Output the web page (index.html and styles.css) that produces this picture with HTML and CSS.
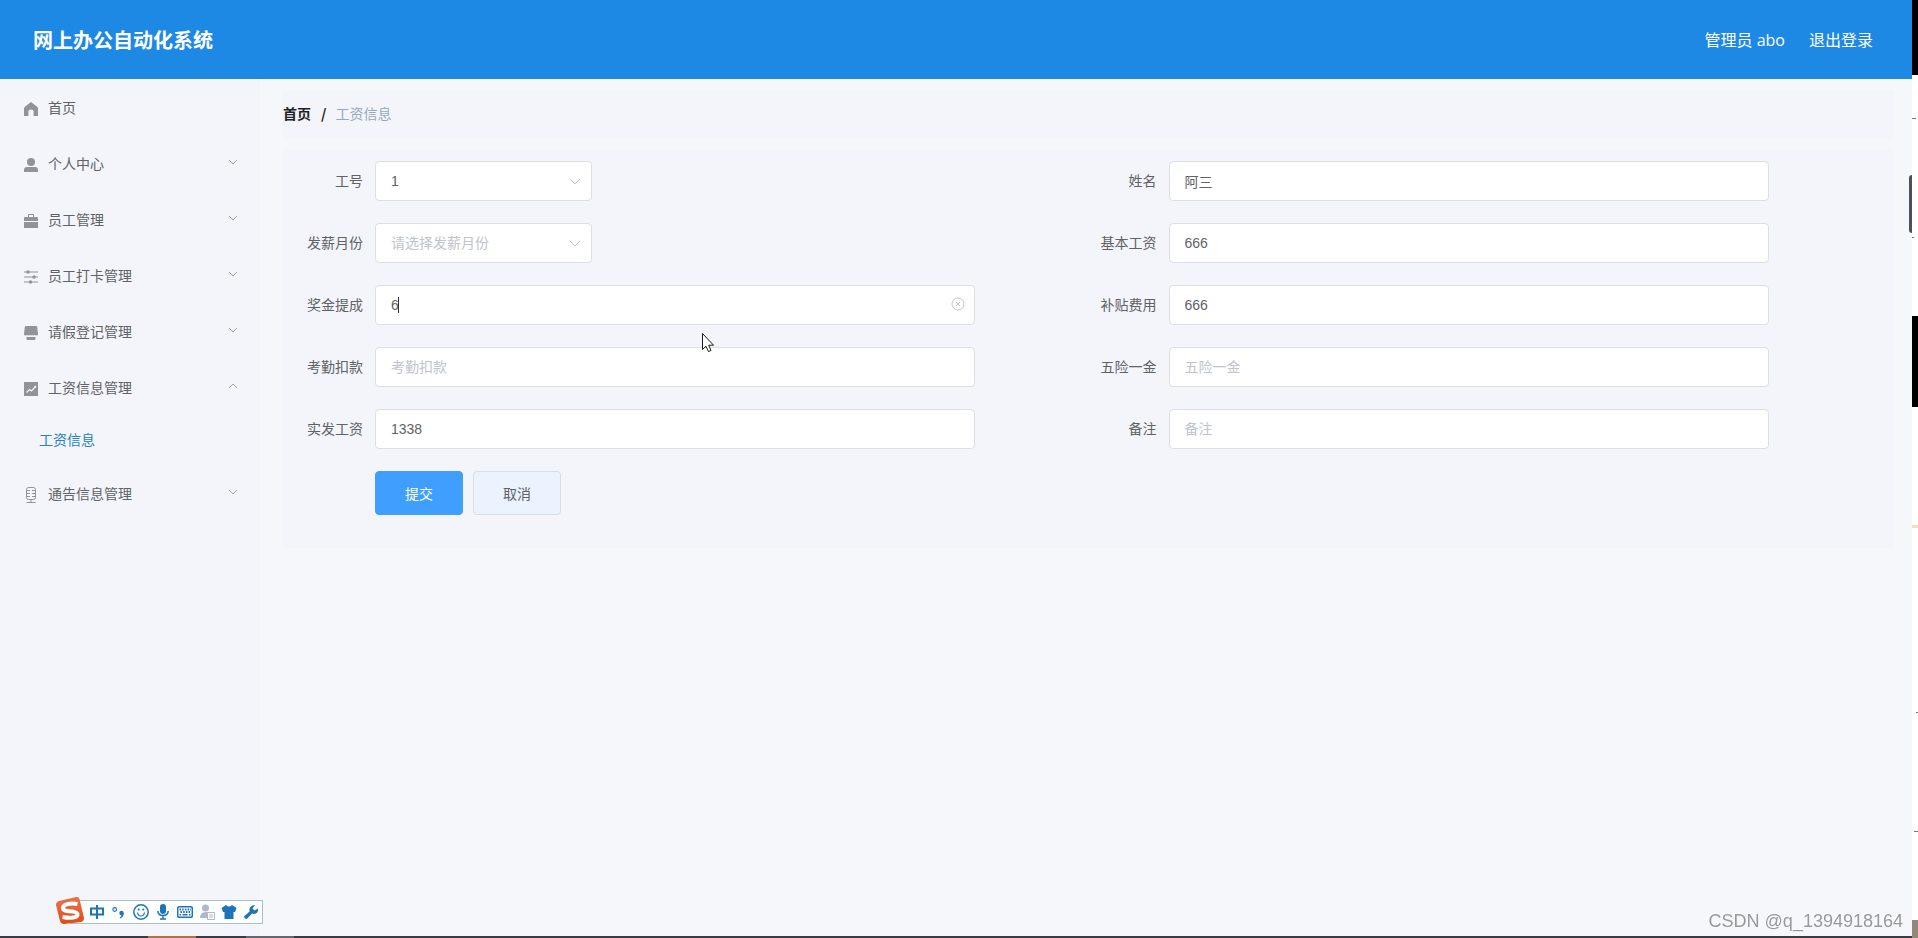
FILE: index.html
```html
<!DOCTYPE html>
<html lang="zh-CN">
<head>
<meta charset="utf-8">
<title>网上办公自动化系统</title>
<link rel="stylesheet" href="styles.css">
</head>
<body>
<div class="desktop">
  <div class="app">
    <header class="header">
      <h1 class="title">网上办公自动化系统</h1>
      <nav class="account">
        <span>管理员 abo</span>
        <a href="#">退出登录</a>
      </nav>
    </header>
    <div class="body">
      <aside class="sidebar">
        <a class="item" href="#">
          <svg class="icon" viewBox="0 0 14 14"><path d="M7 0 13.400 5 14 6.600V14H9.600V9.200Q9.600 7.600 7 7.600T4.400 9.200V14H0V6.600L.6 5Z"/></svg>
          <span class="name">首页</span>
        </a>
        <a class="item" href="#">
          <svg class="icon" viewBox="0 0 14 14"><circle cx="7" cy="4" r="4"/><path d="M0 14V12Q0 9 3 9H11Q14 9 14 12V14Z"/></svg>
          <span class="name">个人中心</span>
          <svg class="arrow" viewBox="0 0 12 12"><path d="M2 4 6 8 10 4"/></svg>
        </a>
        <a class="item" href="#">
          <svg class="icon" viewBox="0 0 14 14"><path d="M4 3V0H10V3H13Q14 3 14 4V7H0V4Q0 3 1 3ZM5 1V3H9V1ZM0 8H14V14H0Z" fill-rule="evenodd"/></svg>
          <span class="name">员工管理</span>
          <svg class="arrow" viewBox="0 0 12 12"><path d="M2 4 6 8 10 4"/></svg>
        </a>
        <a class="item" href="#">
          <svg class="icon" viewBox="0 0 14 14"><path d="M0 1.500H14V2.500H0ZM0 6.500H14V7.500H0ZM0 11.500H14V12.500H0Z"/><circle cx="4" cy="2" r="1.700"/><circle cx="10" cy="7" r="1.700"/><circle cx="6.500" cy="12" r="1.700"/></svg>
          <span class="name">员工打卡管理</span>
          <svg class="arrow" viewBox="0 0 12 12"><path d="M2 4 6 8 10 4"/></svg>
        </a>
        <a class="item" href="#">
          <svg class="icon" viewBox="0 0 14 14"><path d="M2 0H12Q13 0 13.200 1L14 8Q14 9.500 12.500 9.500L11 9 9.500 9.500 8 9 7 9.500 6 9 4.500 9.500 3 9 1.500 9.500Q0 9.500 0 8L.8 1Q1 0 2 0ZM2.500 11H11.500V12.500Q11.500 14 10.500 14H3.500Q2.500 14 2.500 12.500Z"/></svg>
          <span class="name">请假登记管理</span>
          <svg class="arrow" viewBox="0 0 12 12"><path d="M2 4 6 8 10 4"/></svg>
        </a>
        <a class="item" href="#">
          <svg class="icon" viewBox="0 0 14 14"><path d="M0 0H14V14H0Z"/><path d="M2.500 10.500 5.500 7.500 7.500 9 11.500 4.500" fill="none" stroke="#f3f5fa" stroke-width="1.200"/><circle cx="11.300" cy="4.700" r="1" fill="#f3f5fa"/></svg>
          <span class="name">工资信息管理</span>
          <svg class="arrow" viewBox="0 0 12 12"><path d="M2 8 6 4 10 8"/></svg>
        </a>
        <a class="subitem" href="#">工资信息</a>
        <a class="item" href="#">
          <svg class="icon mic" viewBox="0 0 14 16"><path d="M4.500.5H9.500Q11.500.5 11.500 2.500V10.500Q11.500 12.500 9.500 12.500H4.500Q2.500 12.500 2.500 10.500V2.500Q2.500.5 4.500.5ZM3 3.500H6M3 6.500H6M3 9.500H6M8 3.500H11M8 6.500H11M8 9.500H11M7 12.500V15.500M2.500 15.500H11.500"/></svg>
          <span class="name">通告信息管理</span>
          <svg class="arrow" viewBox="0 0 12 12"><path d="M2 4 6 8 10 4"/></svg>
        </a>
      </aside>
      <main class="main">
        <nav class="crumbs">
          <a class="home" href="#">首页</a><span class="slash">/</span><span class="here">工资信息</span>
        </nav>
        <form class="form">
          <div class="field">
            <label for="no">工号</label>
            <div class="control short">
              <select id="no"><option>1</option></select>
              <svg class="arrow" viewBox="0 0 12 12"><path d="M1 3 6 8 11 3"/></svg>
            </div>
          </div>
          <div class="field">
            <label for="name">姓名</label>
            <div class="control"><input id="name" type="text" value="阿三"></div>
          </div>
          <div class="field">
            <label for="month">发薪月份</label>
            <div class="control short">
              <select id="month" class="empty"><option>请选择发薪月份</option></select>
              <svg class="arrow" viewBox="0 0 12 12"><path d="M1 3 6 8 11 3"/></svg>
            </div>
          </div>
          <div class="field">
            <label for="base">基本工资</label>
            <div class="control"><input id="base" type="text" value="666"></div>
          </div>
          <div class="field">
            <label for="bonus">奖金提成</label>
            <div class="control">
              <input id="bonus" type="text" value="6">
              <span class="caret"></span>
              <button class="clear" type="button" aria-label="清空">
                <svg viewBox="0 0 14 14"><circle cx="7" cy="7" r="6"/><path d="M5 5 9 9M9 5 5 9"/></svg>
              </button>
            </div>
          </div>
          <div class="field">
            <label for="allowance">补贴费用</label>
            <div class="control"><input id="allowance" type="text" value="666"></div>
          </div>
          <div class="field">
            <label for="deduct">考勤扣款</label>
            <div class="control"><input id="deduct" type="text" placeholder="考勤扣款"></div>
          </div>
          <div class="field">
            <label for="insurance">五险一金</label>
            <div class="control"><input id="insurance" type="text" placeholder="五险一金"></div>
          </div>
          <div class="field">
            <label for="total">实发工资</label>
            <div class="control"><input id="total" type="text" value="1338"></div>
          </div>
          <div class="field">
            <label for="note">备注</label>
            <div class="control"><input id="note" type="text" placeholder="备注"></div>
          </div>
          <div class="actions">
            <button class="btn primary" type="button">提交</button>
            <button class="btn" type="button">取消</button>
          </div>
        </form>
      </main>
    </div>
    <div class="taskbar"><i class="task active"></i><i class="task"></i></div>
  </div>
  <div class="edge">
    <i class="black top"></i><i class="dash d1"></i><i class="dash d2"></i>
    <i class="black middle"></i><i class="gold"></i><i class="dash d3"></i><i class="dash d4"></i><i class="stone"></i>
    <i class="handle"></i>
  </div>
</div>

<div class="ime">
  <svg class="ime-logo" viewBox="0 0 28 28"><defs><linearGradient id="flame" x2="0" y2="1"><stop stop-color="#e8744f"/><stop offset="1" stop-color="#e34b12"/></linearGradient></defs><path d="M3 4 20 0Q23-.5 23.500 2L28 21Q28 24 25 25L8 27Q5 27 4 24L0 8Q0 5 3 4Z" fill="url(#flame)"/><path d="M21.500 7C14 5.500 6.500 7.500 7 11.500S20.500 13 21.500 17 14 21.500 6.500 20" fill="none" stroke="#fff" stroke-width="4"/></svg>
  <svg class="ime-icon" viewBox="0 0 16 16"><path d="M2 4.500H14V10.500H2ZM8 1V15" class="line"/></svg>
  <svg class="ime-icon" viewBox="0 0 16 16"><circle cx="3.700" cy="5.500" r="1.800" class="thin"/><circle cx="10.500" cy="9" r="2.200"/><path d="M12.700 9Q13 12.500 9 14.500L8.700 13.500Q10.500 12.500 10.700 10.500Z"/></svg>
  <svg class="ime-icon" viewBox="0 0 16 16"><circle cx="8" cy="8" r="7.200" class="mid"/><path d="M4.500 8.500Q5 12 8 12T11.500 8.500" class="thin"/><circle cx="5.700" cy="5.500" r="1.100"/><circle cx="10.300" cy="5.500" r="1.100"/></svg>
  <svg class="ime-icon" viewBox="0 0 16 16"><rect x="5" y="0" width="6" height="10" rx="3"/><path d="M2.800 7Q3 11.500 8 11.500T13.200 7M8 12V15M5 15H11" class="mid"/></svg>
  <svg class="ime-icon" viewBox="0 0 16 16"><rect x=".7" y="2.700" width="14.600" height="10.600" rx="1.500" class="mid"/><path d="M2.500 5.500H14M3.500 8H13" class="line" stroke-dasharray="1.500 1.200"/><path d="M2.500 10.700H4M5.500 10.700H10.500M12 10.700H13.500" class="mid"/></svg>
  <svg class="ime-icon muted" viewBox="0 0 16 16"><circle cx="6.500" cy="4" r="3.500"/><path d="M1 14Q1 8 7 8T13 14Z"/><path d="M8.500 8.500H15.500V15.500H8.500Z" fill="#fff" stroke="#b0b7ca"/><path d="M10 11H14M10 13H14" stroke="#b0b7ca"/></svg>
  <svg class="ime-icon" viewBox="0 0 16 16"><path d="M5 1Q8 4 11 1L15.500 4 14 8H12.500V15H3.500V8H2L.5 4Z"/></svg>
  <svg class="ime-icon" viewBox="0 0 16 16"><path d="M12 1 9.500 4.500 11.500 6.500 15 4.500Q15.500 9.500 11 10L9 9.500 4 14.800Q1.500 15.500 1 12.500L6.500 7.500Q6 1 12 1Z"/></svg>
</div>
<svg class="pointer" viewBox="0 0 12 20"><path d="M.5.5V16.500L4 13.300 6.500 18.500 9 17.500 6.700 12.200H11.500Z"/></svg>
<div class="watermark">CSDN @q_1394918164</div>
</body>
</html>
```
FILE: styles.css
```css
* { box-sizing: border-box; }

body {
  margin: 0;
  font-family: "Noto Sans CJK SC", sans-serif;
  font-size: 14px;
  color: #606266;
}

a { color: inherit; text-decoration: none; }

.desktop { display: flex; min-height: 100vh; }

.app {
  flex: 1;
  display: flex;
  flex-direction: column;
  background: #f5f7fb;
}

.header {
  display: flex;
  justify-content: space-between;
  align-items: center;
  height: 79px;
  padding: 0 39px 0 33px;
  background: #1e88e5;
  color: #fff;
}

.title { margin: 0; font-size: 20px; line-height: 30px; font-weight: 700; }

.account {
  display: flex;
  gap: 24px;
  font-family: "Open Sans", "Noto Sans CJK SC", sans-serif;
  font-size: 16px;
  line-height: 24px;
}

.body { flex: 1; display: flex; }

.sidebar { width: 260px; background: #f3f5fa; }

.item {
  display: flex;
  align-items: center;
  gap: 10px;
  height: 56px;
  padding: 0 21px 0 24px;
}

.icon { width: 14px; height: 14px; margin-top: 3px; fill: #909399; }
.mic { height: 16px; fill: none; stroke: #909399; }
.name { flex: 1; }

.arrow {
  width: 12px;
  height: 12px;
  fill: none;
  stroke: #a4a7ad;
}

.item .arrow { margin-bottom: 2px; }

.subitem {
  display: flex;
  align-items: center;
  height: 50px;
  padding: 0 0 2px 39px;
  color: #2483c0;
}

.main { flex: 1; padding: 11px 18px 0 23px; }

.crumbs {
  display: flex;
  align-items: center;
  height: 49px;
  padding-bottom: 4px;
  background: #f3f5fa;
}

.home, .slash { font-weight: 700; color: #1f2126; }
.slash { margin: 0 9px 0 10px; }
.here { color: #97a8be; }

.form {
  display: grid;
  grid-template-columns: 1fr 1fr;
  row-gap: 22px;
  margin-top: 10px;
  padding: 12px 12px 33px;
  background: #f3f5fa;
}

.field { display: flex; height: 40px; }

.field label {
  width: 80px;
  padding-right: 12px;
  text-align: right;
  line-height: 38px;
}

.control { position: relative; width: 84%; max-width: 600px; }
.short { width: 217px; }

.control input,
.control select {
  display: block;
  width: 100%;
  height: 40px;
  padding: 0 15px;
  border: 1px solid #dcdfe6;
  border-radius: 4px;
  background: #fff;
  color: #606266;
  font: 14px "Liberation Sans", "Noto Sans CJK SC", sans-serif;
  appearance: none;
  outline: 0;
}

.control input::placeholder,
.control .empty { color: #c0c4cc; }

.control .arrow {
  position: absolute;
  right: 11px;
  top: 15px;
  stroke: #c0c4cc;
  pointer-events: none;
}

.caret {
  position: absolute;
  left: 23px;
  top: 12px;
  width: 1px;
  height: 16px;
  background: #303133;
}

.clear {
  position: absolute;
  right: 10px;
  top: 12px;
  width: 14px;
  height: 14px;
  padding: 0;
  border: 0;
  background: none;
}

.clear svg { display: block; fill: none; stroke: #c0c4cc; }

.actions { grid-column: 1 / -1; display: flex; gap: 10px; padding-left: 80px; }

.btn {
  width: 88px;
  height: 44px;
  padding: 0;
  border: 1px solid #d8dde8;
  border-radius: 4px;
  background: #ebf3fe;
  color: #606266;
  font: inherit;
}

.primary { border-color: #409eff; background: #409eff; color: #fff; }

.taskbar {
  display: flex;
  gap: 50px;
  height: 2px;
  padding-left: 148px;
  background: #3b3a46;
}

.task { width: 48px; background: #666670; }
.active { background: #b5703d; }

.edge { position: relative; width: 6px; background: #fff; }
.edge i { position: absolute; right: 0; width: 6px; }
.black { background: #000; }
.top { top: 0; height: 75px; }
.middle { top: 316px; height: 91px; }
.dash { height: 1px; background: #777; }
.edge .d1 { top: 118px; right: 2px; width: 4px; }
.edge .d2 { top: 237px; right: 4px; width: 2px; }
.edge .d3 { top: 712px; width: 2px; }
.edge .d4 { top: 831px; width: 4px; }
.gold { top: 525px; height: 3px; background: #f5dfb5; }
.stone { bottom: 0; height: 18px; background: #91877b; }

.edge .handle {
  top: 175px;
  right: 6px;
  width: 3px;
  height: 58px;
  border-radius: 3px 0 0 3px;
  background: #4c4f60;
}

.ime {
  position: fixed;
  left: 70px;
  bottom: 14px;
  display: flex;
  align-items: center;
  gap: 6px;
  height: 24px;
  padding: 0 3px 0 18px;
  border: 1px solid #abc0cb;
  background: #fdfefe;
}

.ime-logo { position: absolute; left: -15px; top: -4px; width: 28px; height: 28px; }
.ime-icon { width: 16px; height: 16px; fill: #1e73b9; }
.muted { fill: #b0b7ca; }
.line, .mid, .thin { fill: none; stroke: #1e73b9; stroke-width: 2; }
.mid { stroke-width: 1.5; }
.thin { stroke-width: 1.2; }

.pointer {
  position: fixed;
  left: 702px;
  top: 333px;
  width: 12px;
  height: 20px;
  fill: #fff;
  stroke: #15171c;
}

.watermark {
  position: fixed;
  right: 15px;
  bottom: 7px;
  color: #96989c;
  font: 18px/20px "Liberation Sans", sans-serif;
  text-shadow: -1px -1px 0 #fff;
}
```
